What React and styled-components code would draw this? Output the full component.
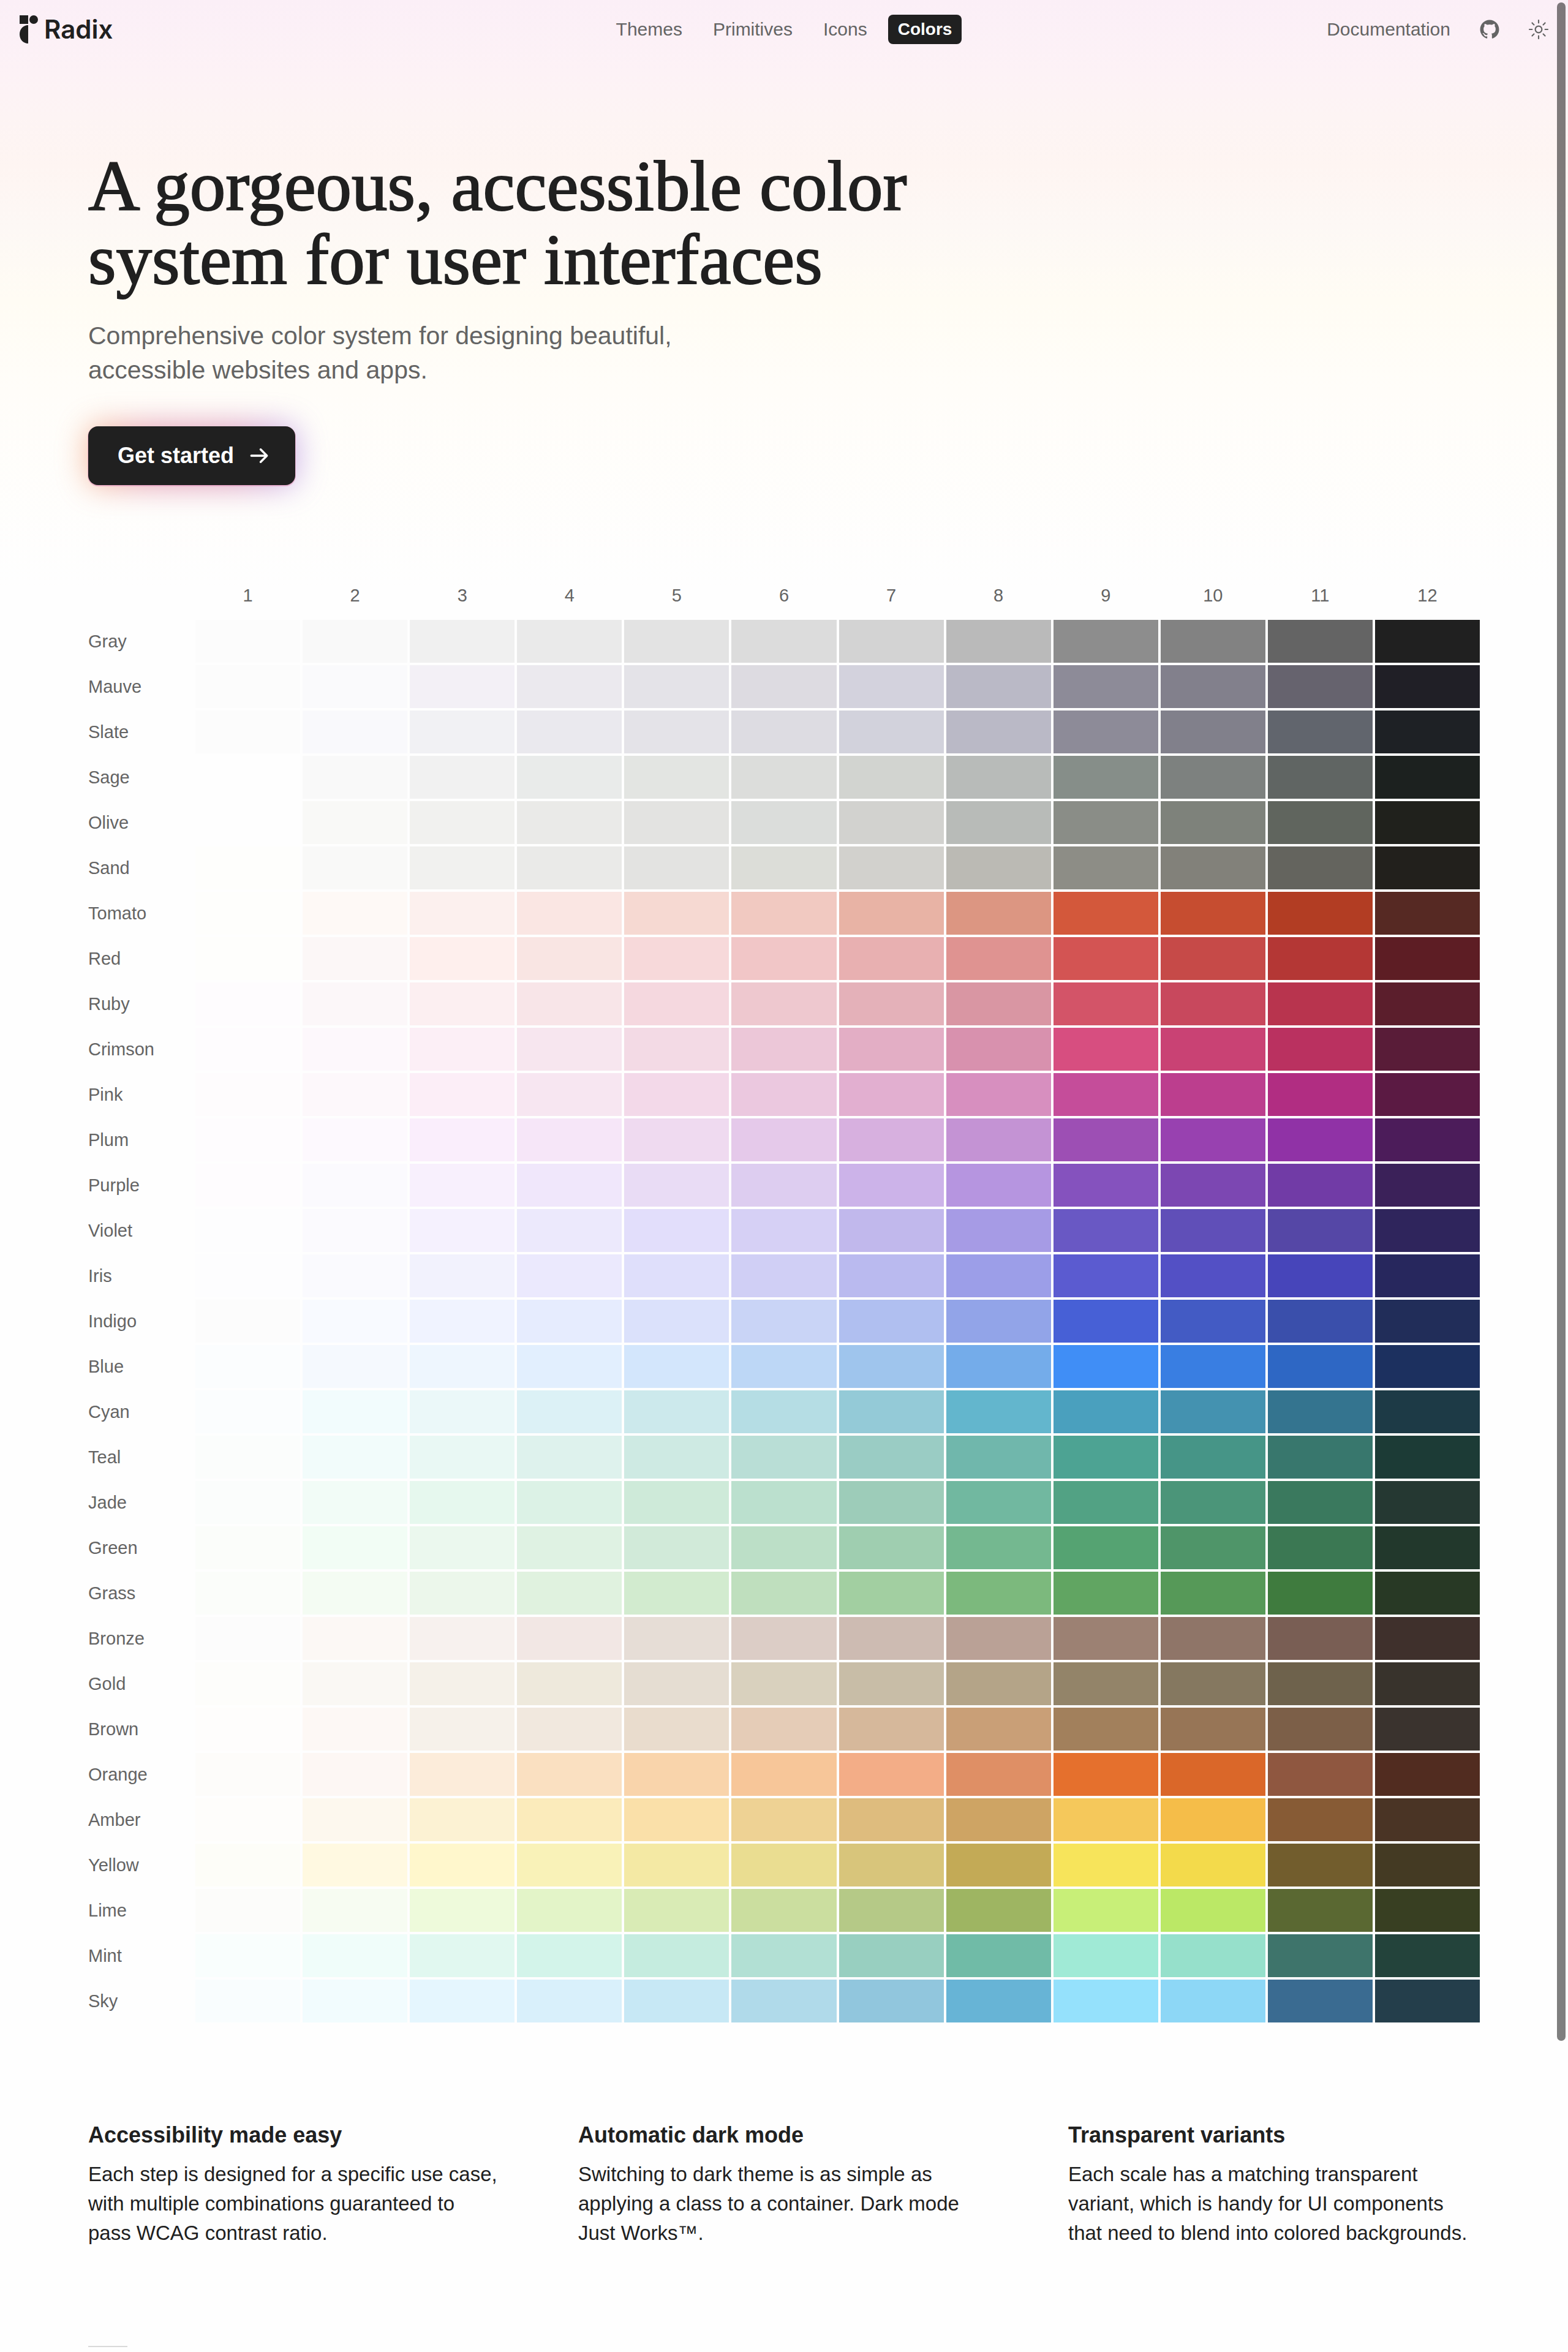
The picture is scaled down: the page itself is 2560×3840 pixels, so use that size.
import React from "react";
import styled, { createGlobalStyle } from "styled-components";
import { RxArrowRight, RxGithubLogo, RxSun } from "react-icons/rx";

const INK = "#202020";
const MUTED = "#646464";

const GlobalStyle = createGlobalStyle`
  *, *::before, *::after { box-sizing: border-box; }
  body {
    margin: 0;
    background: #fefefe;
    color: ${INK};
    font-family: "Liberation Sans", Arial, Helvetica, sans-serif;
    -webkit-font-smoothing: antialiased;
  }
  h1, h2, p { margin: 0; }
`;

const Page = styled.div`
  min-height: 100vh;
  background: linear-gradient(
      180deg,
      #fbeff7 0,
      #fdf2f6 120px,
      #fdf4f4 190px,
      #fef5f2 270px,
      #fdf8f5 370px,
      #fffcf4 490px,
      #fffdf9 640px,
      #fefefe 960px
    )
    no-repeat;
`;

const Header = styled.header`
  display: grid;
  grid-template-columns: 1fr auto 1fr;
  align-items: center;
  height: 96px;
  padding: 0 32px;
`;

const Logo = styled.a`
  display: flex;
  align-items: center;
  gap: 10px;
  color: ${INK};
  font: 600 42px/48px Inter, sans-serif;
  text-decoration: none;
`;

const Nav = styled.nav`
  display: flex;
  gap: 18px;
`;

const NavLink = styled.a`
  padding: 0 16px;
  border-radius: 8px;
  font-size: ${(p) => (p.$active ? 28 : 30)}px;
  font-weight: ${(p) => (p.$active ? 700 : 400)};
  line-height: 48px;
  color: ${(p) => (p.$active ? "#fff" : MUTED)};
  background: ${(p) => (p.$active ? INK : "transparent")};
  text-decoration: none;
`;

const Tools = styled.div`
  display: flex;
  align-items: center;
  justify-content: flex-end;
  gap: 48px;
  color: ${MUTED};
  font-size: 30px;

  svg {
    display: block;
    width: 32px;
    height: 32px;
  }
`;

const ToolLink = styled.a`
  color: inherit;
  text-decoration: none;
`;

const IconButton = styled.button`
  padding: 0;
  border: 0;
  background: none;
  color: inherit;
`;

const Main = styled.main`
  padding: 148px 144px 8px;
`;

const Title = styled.h1`
  font: 400 117px/120px "Liberation Serif", "Times New Roman", serif;
  -webkit-text-stroke: 2px ${INK};
`;

const Lead = styled.p`
  margin-top: 36px;
  font-size: 41px;
  line-height: 56px;
  color: ${MUTED};
`;

const StartButton = styled.button`
  position: relative;
  z-index: 0;
  display: flex;
  align-items: center;
  gap: 22px;
  height: 96px;
  margin-top: 64px;
  padding: 0 40px 0 48px;
  border: 0;
  border-radius: 16px;
  background: none;
  color: #fff;
  font: 700 36px/48px "Liberation Sans", Arial, sans-serif;

  &::before {
    content: "";
    position: absolute;
    inset: -4px;
    z-index: -2;
    border-radius: 24px;
    background: linear-gradient(90deg, #f4a06a, #d4688a 30%, #c8669a 70%, #a98be8);
    filter: blur(24px);
    opacity: 0.6;
  }

  &::after {
    content: "";
    position: absolute;
    inset: 0;
    z-index: -1;
    border-radius: 16px;
    background: ${INK};
    box-shadow: 0 1px 0 1px rgba(228, 150, 190, 0.6);
  }

  svg {
    width: 38px;
    height: 38px;
    stroke: currentColor;
    stroke-width: 0.4;
  }
`;

const Scales = styled.table`
  display: block;
  margin-top: 140px;
  font-size: 29px;
  color: ${MUTED};

  thead, tbody { display: grid; gap: 4px; }
`;

const ScaleRow = styled.tr`
  display: grid;
  grid-template-columns: repeat(13, minmax(0, 1fr));
  column-gap: 4px;
  height: ${(p) => (p.$head ? 80 : 70)}px;
  align-items: center;
`;

const StepHead = styled.th`
  padding: 0;
  font-weight: 400;
  text-align: center;
`;

const ScaleName = styled.th`
  padding: 0;
  font-weight: 400;
  text-align: left;
`;

const Swatch = styled.td`
  height: 100%;
  padding: 0;
  background: ${(p) => p.$color};
`;

const Features = styled.section`
  display: grid;
  grid-template-columns: repeat(3, minmax(0, 1fr));
  column-gap: 128px;
  margin-top: 160px;
`;

const FeatureTitle = styled.h2`
  margin-bottom: 16px;
  font-size: 36px;
  line-height: 48px;
`;

const FeatureText = styled.p`
  font-size: 33px;
  line-height: 48px;
`;

const Rule = styled.hr`
  width: 64px;
  height: 2px;
  margin: 160px 0 0;
  border: 0;
  background: #d9d9d9;
`;

const ScrollThumb = styled.div`
  position: fixed;
  top: 4px;
  right: 4px;
  width: 14px;
  height: calc(100vh * 13 / 15);
  border-radius: 7px;
  background: rgba(0, 0, 0, 0.5);
`;

const steps = Array.from({ length: 12 }, (_, i) => i + 1);

const scales = {
  Gray: "fcfcfc f9f9f9 f0f0f0 eaeaea e3e3e3 dcdcdc d3d3d3 bababa 8d8d8d 828282 646464 202020",
  Mauve: "fcfcfc fafafc f3f0f6 ebe9ee e4e3e8 dddbe1 d3d2dd bab9c6 8d8b98 82808c 66636e 201f26",
  Slate: "fcfcfc f9f9fc f1f1f4 eae9ee e4e3e8 dddce2 d2d2dc bab9c6 8d8b98 81808b 61656d 1e2125",
  Sage: "fefefe f9f9f9 f1f1f1 e9ebea e3e5e2 dcdddb d2d4d0 b8bbb9 868e89 7d817f 606563 1c211f",
  Olive: "fefefe f9f9f7 f1f1ef eaeae8 e3e3e1 dbdddb d2d2cf b8bbb8 8a8d87 7e827b 60655e 20211c",
  Sand: "fefefc f9f9f8 f1f1ef eaeae8 e3e3e1 dcddd8 d2d1cd bbbab4 8d8d86 82817a 64645e 22201c",
  Tomato: "fefefc fef9f6 fcf0ee fae6e3 f6d9d2 f1c9c1 e8b3a5 dc9682 d3583b c64d30 b23d23 562923",
  Red: "fefefc fcf7f7 feefed f9e5e3 f7d9da f1c6c7 e8b0b1 df9391 d35453 c64a48 b43735 5d1d24",
  Ruby: "fefcfe fcf7f9 fceff1 f8e5e8 f5d8df eec8cf e4b1b9 d996a3 d35468 c8485d b8344e 5b1e2c",
  Crimson: "fefcfe fdf8fc fceff6 f7e6ef f3dae5 ecc7d8 e3aec5 d891ae d74e80 c94274 ba3160 591c38",
  Pink: "fefcfd fdf8fb fceef7 f7e6f1 f3d9e9 ebc8df e2afd0 d78fbf c54d9a bc3e8e b12d82 5b1a43",
  Plum: "fefcfe fdf9fe faeefc f6e6f8 efdaf0 e5c9ea d7b0df c493d4 9d4fb4 9841b0 9032a6 4c1c5a",
  Purple: "fefcfe fbfafe f8f0fd f0e7fb e9dcf5 ddcdf0 ccb3e9 b695e0 8552be 7c47b2 713ba6 3b2159",
  Violet: "fdfdfe fbfafe f5f1fe ece9fc e2defb d6d0f5 c1b8ec a69be5 6958c4 604fb8 5547a6 2f255c",
  Iris: "fdfdfe fafafe f2f2fd ebe9fd dfdffb d0cff5 babaef 9c9ee8 5b5bd0 5350c5 4745ba 27275d",
  Indigo: "fcfcfc f8faff f0f3ff e6ecfe dbe1fb c9d4f6 b0bff0 92a4e8 4760d6 435bc4 3a4fab 212d59",
  Blue: "fbfdfe f5f9fe eef6fe e2effe d3e6fc bdd7f6 9fc5ed 74acea 408ef6 397ee2 2e67c4 1c305f",
  Cyan: "fbfdfe f2fcfd ebf8f9 dcf1f6 cce9ec b5dde4 94cad7 63b6cd 4aa0be 4492b0 34748f 1d3a46",
  Teal: "fbfdfc f2fcfb e9f8f4 def2ed ceeae3 b9ded6 9accc4 70b7ac 4da393 469587 38776d 1c3b36",
  Jade: "fbfdfc f2fcf7 e6f8ee dcf2e6 ceead9 bbe0ce 9dccb9 71b8a0 52a284 4b9579 3a795e 253832",
  Green: "fbfdfa f2fdf5 ebf8ee dff2e3 d1ead9 bcdfc7 9fceb0 74b890 55a372 4f9569 3b7853 22382c",
  Grass: "fbfdfa f4fcf3 ecf7eb e0f2df d2ebcf bfdfbe a2cfa1 7cb97d 61a562 569958 3f7b3e 283925",
  Bronze: "fcfcfc fcf8f5 f7f1ee f2e7e4 e6ddd6 dccdc6 cdbbb2 baa196 9c8173 8f7568 795e54 3f302c",
  Gold: "fdfdfb faf8f4 f5f1e9 eee9dc e5ddd2 d9d1be c8bda7 b4a488 938469 857860 6e624c 38332c",
  Brown: "fefdfc fdf8f5 f6f1ea f1e8de e9dccd e5ccb7 d6b89b c99f77 a2805c 977556 7c5f48 3a332e",
  Orange: "fdfcfa fdf7f4 fcecda fae0c1 f9d4ab f7c699 f3ad87 df8f65 e5702d da6729 8f5740 512c20",
  Amber: "fefdfb fdf8ee fcf2d3 fbebbb fae0a9 eed294 debc7e cea464 f5c85b f5bd49 875b35 4a3425",
  Yellow: "fdfdf8 fff9e1 fff7cc f9f2b8 f4e9a4 eadd91 d8c57b c3aa56 f7e45b f3da4b 725d2d 443a23",
  Lime: "fcfcfa f7fcf2 eefadb e3f4c8 d9ebb5 cbde9f b5c987 9eb562 c8ef78 bbe866 5a6832 383f22",
  Mint: "f9fefd f0fdfa e1f8f0 d3f4ea c5ecdf b2e0d4 98cfc0 70bba7 a0ead6 96e0cb 3e746b 23433b",
  Sky: "f9fdfe f2fcfe e5f6fe d9f0fb c7e8f5 b0daea 91c6dd 67b4d6 95e1fc 8dd7f6 3a6b91 243e4b",
};

const features = [
  {
    title: "Accessibility made easy",
    text: "Each step is designed for a specific use case, with multiple combinations guaranteed to pass WCAG contrast ratio.",
  },
  {
    title: "Automatic dark mode",
    text: "Switching to dark theme is as simple as applying a class to a container. Dark mode Just Works™.",
  },
  {
    title: "Transparent variants",
    text: "Each scale has a matching transparent variant, which is handy for UI components that need to blend into colored backgrounds.",
  },
];

function LogoMark() {
  return (
    <svg width="30" height="46" viewBox="0 0 30 46" fill="currentColor" aria-hidden="true">
      <path d="M0 0h14v14H0zM14 46C6 46 0 39.500 0 31S6 16 14 16z" />
      <circle cx="23" cy="7" r="7" />
    </svg>
  );
}

export default function App() {
  return (
    <Page>
      <GlobalStyle />
      <Header>
        <Logo href="#home">
          <LogoMark />
          Radix
        </Logo>
        <Nav>
          <NavLink href="#themes">Themes</NavLink>
          <NavLink href="#primitives">Primitives</NavLink>
          <NavLink href="#icons">Icons</NavLink>
          <NavLink href="#colors" $active aria-current="page">
            Colors
          </NavLink>
        </Nav>
        <Tools>
          <ToolLink href="#documentation">Documentation</ToolLink>
          <ToolLink href="#github" aria-label="GitHub">
            <RxGithubLogo />
          </ToolLink>
          <IconButton type="button" aria-label="Toggle theme">
            <RxSun />
          </IconButton>
        </Tools>
      </Header>

      <Main>
        <Title>
          A gorgeous, accessible color
          <br />
          system for user interfaces
        </Title>
        <Lead>
          Comprehensive color system for designing beautiful,
          <br />
          accessible websites and apps.
        </Lead>
        <StartButton type="button">
          Get started
          <RxArrowRight />
        </StartButton>

        <Scales>
          <thead>
            <ScaleRow $head>
              <td />
              {steps.map((step) => (
                <StepHead key={step} scope="col">
                  {step}
                </StepHead>
              ))}
            </ScaleRow>
          </thead>
          <tbody>
            {Object.entries(scales).map(([name, colors]) => (
              <ScaleRow key={name}>
                <ScaleName scope="row">{name}</ScaleName>
                {colors.split(" ").map((color, i) => (
                  <Swatch key={i} $color={`#${color}`} />
                ))}
              </ScaleRow>
            ))}
          </tbody>
        </Scales>

        <Features>
          {features.map(({ title, text }) => (
            <article key={title}>
              <FeatureTitle>{title}</FeatureTitle>
              <FeatureText>{text}</FeatureText>
            </article>
          ))}
        </Features>
        <Rule />
      </Main>
      <ScrollThumb />
    </Page>
  );
}
